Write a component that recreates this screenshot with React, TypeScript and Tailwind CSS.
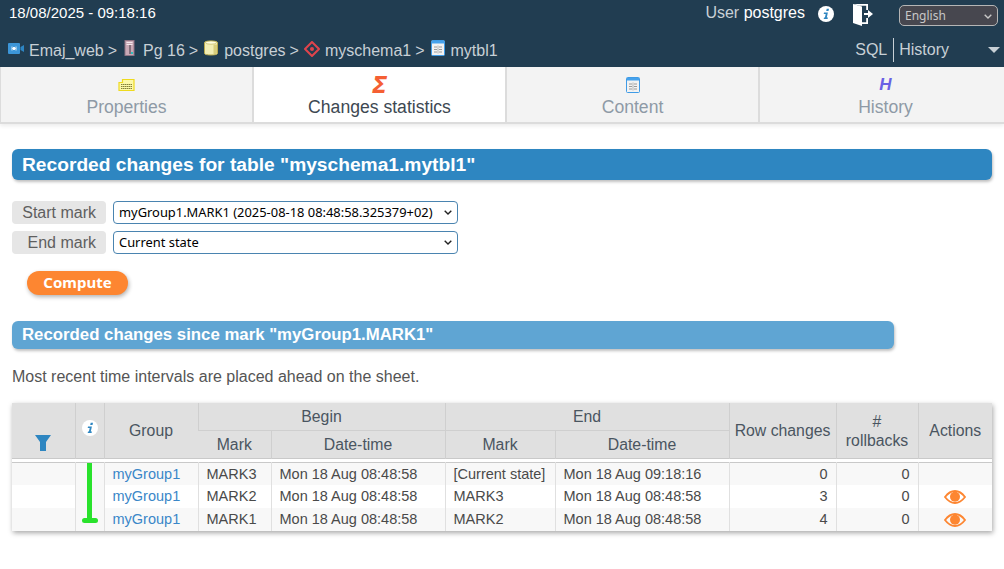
function InfoIcon() {
  return (
    <svg width="16" height="16" viewBox="0 0 16 16">
      <circle cx="8" cy="8" r="8" fill="#fff" />
      <path d="M8.700 2.800h2.300l-.5 2.100H8.200zM6 6.400h3.900L8.800 11.400h1.100l-.3 1.500H5.700l.3-1.500h.9l.8-3.500H5.700z" fill="#2e86c1" />
    </svg>
  );
}

function BreadIcon({ kind }: { kind: string }) {
  if (kind === "emaj")
    return (
      <svg width="16" height="12" viewBox="0 0 16 12" className="block">
        <rect x="0" y="0" width="12" height="11" rx="1" fill="#3c96d8" />
        <path d="M4 3.500v4M8 3.500v4M4.500 5.500l1.500-1.400v2.800zM7.500 5.500l-1.500-1.400v2.800z" stroke="#fff" strokeWidth="0.800" fill="#fff" />
        <path d="M12.500 4l3.500-2v7l-3.500-2z" fill="#2d86c4" />
      </svg>
    );
  if (kind === "server")
    return (
      <svg width="11" height="16" viewBox="0 0 11 16" className="block">
        <rect x="0.500" y="0" width="10" height="16" fill="#8f7585" />
        <rect x="1.500" y="1" width="8" height="14" fill="#c9a9b6" />
        <path d="M2.500 2.500h6M2.500 4.500h6" stroke="#f3e8ec" strokeWidth="1" />
        <rect x="5" y="5" width="2" height="9" fill="#85707c" />
        <rect x="7" y="12" width="2" height="2" fill="#30c0c0" />
      </svg>
    );
  if (kind === "db")
    return (
      <svg width="14" height="16" viewBox="0 0 14 16" className="block">
        <path d="M.5 2.500C.5.500 13.500.500 13.500 2.500v11c0 2-13 2-13 0z" fill="#f3eeb4" stroke="#b9a94e" />
        <ellipse cx="7" cy="2.600" rx="5.500" ry="1.600" fill="#fffde0" stroke="#b9a94e" strokeWidth="0.600" />
        <path d="M9.500 4.500h3.500v9l-3.500 1.200z" fill="#d8cd7c" />
      </svg>
    );
  if (kind === "schema")
    return (
      <svg width="16" height="16" viewBox="0 0 16 16" className="block">
        <path d="M8 1l7 7-7 7-7-7z" fill="none" stroke="#e0444c" strokeWidth="2" strokeLinejoin="round" />
        <circle cx="8" cy="8" r="2" fill="#e0444c" />
      </svg>
    );
  return <TableIcon />;
}

function TableIcon() {
  return (
    <svg width="14" height="16" viewBox="0 0 14 16" className="block">
      <rect x="0.500" y="0.500" width="13" height="15" rx="1" fill="#f2f2f2" stroke="#3f9be6" />
      <rect x="1" y="1" width="12" height="2.500" fill="#46a2ec" />
      <path d="M3 7h3M8 7h3M3 9.500h3M8 9.500h3M3 12h3M8 12h3" stroke="#9a9a9a" strokeWidth="1" />
      <path d="M7 5.500v8" stroke="#b5b5b5" strokeWidth="1" />
    </svg>
  );
}

function EyeIcon() {
  return (
    <svg width="22" height="14" viewBox="0 0 22 14" className="block mx-auto">
      <path d="M1 7C4 3 7.400 1 11 1s7 2 10 6c-3 4-6.400 6-10 6S4 11 1 7z" fill="none" stroke="#fd8631" strokeWidth="1.800" />
      <circle cx="11" cy="6.800" r="5" fill="#fd8631" />
    </svg>
  );
}

function Chevron({ color }: { color: string }) {
  return (
    <svg width="8" height="5" viewBox="0 0 8 5" className="absolute right-[6px] top-[9px] pointer-events-none">
      <path d="M.7.700L4 4l3.300-3.300" fill="none" stroke={color} strokeWidth="1.400" />
    </svg>
  );
}

function MarkSelect({ value }: { value: string }) {
  return (
    <div className="relative h-[23px]">
      <select className="block w-full h-[23px] appearance-none rounded-[4px] border border-[#4a84b0] bg-white pl-[5px] text-[12.9px] text-black font-['Noto_Sans',sans-serif]">
        <option>{value}</option>
      </select>
      <Chevron color="#222" />
    </div>
  );
}

const crumbs = [
  { icon: "emaj", label: "Emaj_web", box: "w-[21px]", pos: "mt-[-3px]" },
  { icon: "server", label: "Pg 16", box: "w-[20px] pl-[1px]", pos: "mt-[-5px]" },
  { icon: "db", label: "postgres", box: "w-[20px]", pos: "mt-[-5px]" },
  { icon: "schema", label: "myschema1", box: "w-[21px]", pos: "mt-[-4px]" },
  { icon: "table", label: "mytbl1", box: "w-[20px]", pos: "mt-[-5px]" },
];

const rows = [
  { mark: "MARK3", begin: "Mon 18 Aug 08:48:58", end: "[Current state]", endDate: "Mon 18 Aug 09:18:16", changes: 0, eye: false },
  { mark: "MARK2", begin: "Mon 18 Aug 08:48:58", end: "MARK3", endDate: "Mon 18 Aug 08:48:58", changes: 3, eye: true },
  { mark: "MARK1", begin: "Mon 18 Aug 08:48:58", end: "MARK2", endDate: "Mon 18 Aug 08:48:58", changes: 4, eye: true },
];

const th = "border-l border-[#cfcfcf] first:border-l-0 font-normal p-0";
const td = "border-l border-[#e0e0e0] first:border-l-0 h-[23px] px-2 pt-[1px] pb-0 whitespace-nowrap";

export default function App() {
  return (
    <div className="min-h-[569px] overflow-hidden bg-white text-[#4a4a4a] font-['Liberation_Sans',Arial,sans-serif] text-[15px]">
      <header className="h-[67px] bg-[#213d51] text-[#c8d0d6]">
        <div className="flex items-start h-[34px]">
          <div className="pl-[9px] pt-[4px] text-[15px] leading-[18px] text-white">18/08/2025 - 09:18:16</div>
          <div className="ml-auto flex items-start">
            <div className="pt-[4px] text-[16px] leading-[18px]">
              User <span className="text-white">postgres</span>
            </div>
            <div className="ml-[13px] pt-[6px]">
              <InfoIcon />
            </div>
            <div className="ml-[19px] pt-[3px]">
              <svg width="20" height="23" viewBox="0 0 20 23" className="block">
                <path d="M0 1h15v6h-1.800V2.700H6L4 2zM15 15v6H8v-1.700h5.200V15z" fill="#fff" />
                <path d="M0 1l9 2.500v19.500l-9-3z" fill="#fff" />
                <path d="M11 10h4V7l5 4-5 4v-3h-4z" fill="#fff" />
              </svg>
            </div>
            <div className="relative ml-[26px] mr-[6px] mt-[5px] h-[21px] w-[99px]">
              <select className="block h-[21px] w-full appearance-none rounded-[5px] border border-[#b5b5b5] bg-[#47474f] pl-[5px] text-[12px] text-[#c8c8c8] font-['Noto_Sans',sans-serif]">
                <option>English</option>
              </select>
              <Chevron color="#c8c8c8" />
            </div>
          </div>
        </div>
        <div className="flex items-center h-[33px]">
          <nav className="pl-[8px] flex items-center text-[16px]">
            {crumbs.map((c, i) => (
              <span key={c.label} className="flex items-center">
                <span className={c.box + " " + c.pos}>
                  <BreadIcon kind={c.icon} />
                </span>
                <span>{c.label}</span>
                {i < crumbs.length - 1 && (
                  <span className={"ml-[4px] " + (c.icon === "db" ? "mr-[5px]" : "mr-[6px]")}>&gt;</span>
                )}
              </span>
            ))}
          </nav>
          <div className="ml-auto -mt-[2px] flex items-center text-[16px]">
            <span className="pr-[6px]">SQL</span>
            <span className="border-l border-[#c8d0d6] pl-[5px]">History</span>
            <span className="ml-[39px] mr-[4px] w-0 h-0 border-x-[6px] border-x-transparent border-t-[6px] border-t-[#c8d0d6]" />
          </div>
        </div>
      </header>

      <div className="grid grid-cols-[repeat(4,253px)] h-[57px] pl-[1px] bg-[#dcdcdc] border-b-[2px] border-[#dcdcdc] shadow-[0_2px_4px_rgba(0,0,0,0.08)]">
        <Tab label="Properties">
          <svg width="17" height="14" viewBox="0 0 17 14" className="block">
            <path d="M1 4.500h3.500v-3H16v11H1z" fill="#fdf8a8" stroke="#eeda1e" strokeWidth="1.200" />
            <path d="M3 6.500h11M3 8.500h11M3 10.500h11" stroke="#77732c" strokeDasharray="1.500 0.500" strokeWidth="0.900" />
          </svg>
        </Tab>
        <Tab label="Changes statistics" active>
          <span className="text-[#f55f33] font-bold italic text-[23px] leading-[16px] font-['DejaVu_Sans',sans-serif]">Σ</span>
        </Tab>
        <Tab label="Content">
          <TableIcon />
        </Tab>
        <Tab label="History">
          <span className="text-[#6a60e4] font-bold italic text-[17px] leading-[16px]">H</span>
        </Tab>
      </div>

      <main className="px-[12px]">
        <h1 className="mt-[25px] h-[31px] w-[980px] rounded-[6px] bg-[#2e86c1] pl-[10px] text-[19.2px] leading-[31px] font-bold text-white shadow-[1px_2px_3px_rgba(0,0,0,0.25)]">
          Recorded changes for table "myschema1.mytbl1"
        </h1>

        <div className="mt-[21px] grid grid-cols-[94px_345px] gap-x-[7px] gap-y-[7px] text-[16px]">
          <label className="h-[23px] rounded-[4px] bg-[#e6e6e6] pr-[10px] text-right leading-[23px] text-[#5f5f5f]">Start mark</label>
          <MarkSelect value="myGroup1.MARK1 (2025-08-18 08:48:58.325379+02)" />
          <label className="h-[23px] rounded-[4px] bg-[#e6e6e6] pr-[10px] text-right leading-[23px] text-[#5f5f5f]">End mark</label>
          <MarkSelect value="Current state" />
        </div>

        <button className="mt-[17px] ml-[15px] block h-[24px] w-[101px] rounded-[12px] bg-[#fd8631] pb-[2px] text-center text-[15px] leading-[22px] font-bold text-white font-['Noto_Sans',sans-serif] shadow-[1px_2px_4px_rgba(0,0,0,0.3)]">
          Compute
        </button>

        <h2 className="mt-[26px] h-[28px] w-[882px] rounded-[6px] bg-[#5fa5d3] pl-[10px] text-[16.8px] leading-[28px] font-bold text-white shadow-[1px_2px_3px_rgba(0,0,0,0.25)]">
          Recorded changes since mark "myGroup1.MARK1"
        </h2>

        <p className="mt-[19px] text-[16px] leading-[18px] text-[#555]">Most recent time intervals are placed ahead on the sheet.</p>

        <table className="mt-[17px] w-[980px] table-fixed border-collapse text-[14.5px] shadow-[1px_2px_5px_rgba(0,0,0,0.35)]">
          <colgroup>
            <col className="w-[63px]" />
            <col className="w-[29px]" />
            <col className="w-[94px]" />
            <col className="w-[73px]" />
            <col className="w-[174px]" />
            <col className="w-[110px]" />
            <col className="w-[174px]" />
            <col className="w-[107px]" />
            <col className="w-[82px]" />
            <col className="w-[74px]" />
          </colgroup>
          <thead className="bg-[#e0e0e0] text-[15.8px] text-[#4a5560]">
            <tr className="h-[27px]">
              <th rowSpan={2} className={th + " align-bottom pb-[7px]"}>
                <svg width="16" height="16" viewBox="0 0 16 16" className="block mx-auto">
                  <path d="M0 0h16l-5 7v9H5V7z" fill="#2e86c1" />
                </svg>
              </th>
              <th rowSpan={2} className={th + " align-top pt-[17px]"}>
                <span className="flex justify-center">
                  <InfoIcon />
                </span>
              </th>
              <th rowSpan={2} className={th + " pt-[2px]"}>Group</th>
              <th colSpan={2} className={th + " pt-[2px] border-b border-[#cfcfcf]"}>Begin</th>
              <th colSpan={2} className={th + " pt-[2px] border-b border-[#cfcfcf]"}>End</th>
              <th rowSpan={2} className={th + " pt-[2px]"}>Row changes</th>
              <th rowSpan={2} className={th + " pt-[2px] leading-[19px]"}>#<br />rollbacks</th>
              <th rowSpan={2} className={th + " pt-[2px]"}>Actions</th>
            </tr>
            <tr className="h-[28px] border-b border-[#c9c9c9]">
              <th className={th + " pt-[1px]"}>Mark</th>
              <th className={th + " pt-[1px]"}>Date-time</th>
              <th className={th + " pt-[1px]"}>Mark</th>
              <th className={th + " pt-[1px]"}>Date-time</th>
            </tr>
            <tr className="border-b border-[#c9c9c9]">
              <td colSpan={10} className="h-[4px] bg-white p-0" />
            </tr>
          </thead>
          <tbody>
            {rows.map((r, i) => (
              <tr key={r.mark} className={i % 2 === 0 ? "bg-[#f8f8f8]" : "bg-white"}>
                <td className={td} />
                {i === 0 && (
                  <td rowSpan={3} className="border-l border-[#e0e0e0] p-0 align-top">
                    <svg width="29" height="60" viewBox="0 0 29 60" className="block">
                      <rect x="11" y="0" width="5" height="58" fill="#29e22c" />
                      <rect x="6" y="55" width="16" height="5" rx="2.500" fill="#29e22c" />
                    </svg>
                  </td>
                )}
                <td className={td + " text-[#3a87c8]"}>myGroup1</td>
                <td className={td}>{r.mark}</td>
                <td className={td}>{r.begin}</td>
                <td className={td}>{r.end}</td>
                <td className={td}>{r.endDate}</td>
                <td className={td + " text-right"}>{r.changes}</td>
                <td className={td + " text-right"}>0</td>
                <td className={td}>{r.eye && <EyeIcon />}</td>
              </tr>
            ))}
          </tbody>
        </table>
      </main>
    </div>
  );
}

function Tab({ label, active, children }: { label: string; active?: boolean; children: React.ReactNode }) {
  return (
    <div className={"flex flex-col items-center pt-[10px] border-r-[2px] border-[#dcdcdc] " + (active ? "bg-white text-[#3d4852]" : "bg-[#f3f3f3] text-[#8e9aa6]")}>
      <div className="flex h-[16px] items-center justify-center">{children}</div>
      <div className="mt-[4px] text-[17.6px] leading-[21px]">{label}</div>
    </div>
  );
}
